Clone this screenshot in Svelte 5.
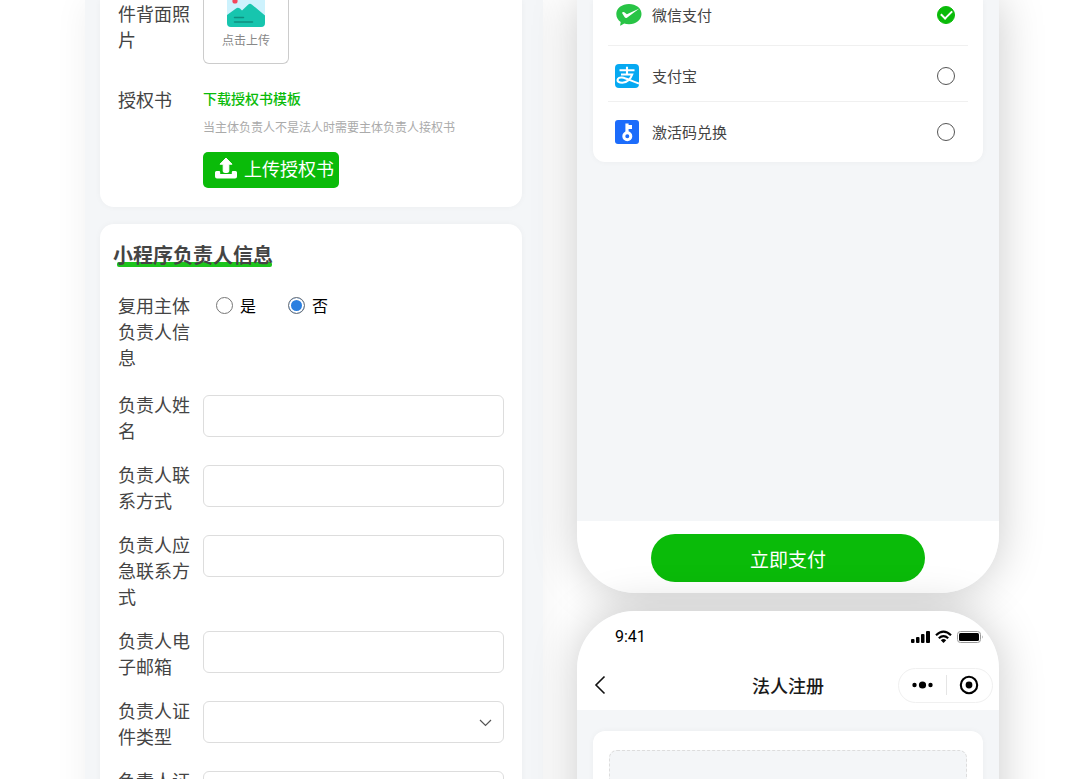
<script>
  let reuse = $state('no');
  let payment = $state('wechat');

  const fields = [
    { id: 'name', label: '负责人姓名', type: 'text' },
    { id: 'phone', label: '负责人联系方式', type: 'tel' },
    { id: 'emergency', label: '负责人应急联系方式', type: 'tel' },
    { id: 'email', label: '负责人电子邮箱', type: 'email' },
    { id: 'idtype', label: '负责人证件类型', type: 'select' },
    { id: 'idno', label: '负责人证', type: 'text' },
  ];

  const methods = [
    { id: 'wechat', label: '微信支付' },
    { id: 'alipay', label: '支付宝' },
    { id: 'code', label: '激活码兑换' },
  ];
</script>

<div class="page">
  <section class="screen form-screen">
    <div class="card first">
      <div class="row">
        <span class="label">件背面照片</span>
        <button type="button" class="upload">
          <svg width="38" height="27" viewBox="0 0 38 27" aria-hidden="true">
            <rect y="-12" width="38" height="39" rx="4" fill="#cdf2fd" />
            <circle cx="8" cy="1" r="2.6" fill="#f5475b" />
            <path
              d="M0 15 9 8.4Q11 7 13 8.6L15 10.4 21.3 4.4Q23 3 24.7 4.4L38 15.5V23Q38 27 34 27H4Q0 27 0 23Z"
              fill="#17c5ae"
            />
            <path d="M7.5 17.5h9M7.5 22h18" stroke="#0f8e80" stroke-width="1.5" stroke-linecap="round" />
          </svg>
          <span>点击上传</span>
        </button>
      </div>
      <div class="row">
        <span class="label">授权书</span>
        <div>
          <a class="download" href="#template">下载授权书模板</a>
          <p class="hint">当主体负责人不是法人时需要主体负责人接权书</p>
          <button type="button" class="upload-btn">
            <svg width="22" height="22" viewBox="0 0 22 22" aria-hidden="true">
              <path
                d="M11 1 17 7.2H13.8V14Q13.8 15.5 12.3 15.5H9.7Q8.2 15.5 8.2 14V7.2H5Z"
                fill="#fff"
                stroke="#fff"
                stroke-linejoin="round"
              />
              <path
                d="M1.5 14H4Q5.2 14 5.2 15.2V17H16.8V15.2Q16.8 14 18 14H20.5Q22 14 22 15.5V19.5Q22 21.5 20 21.5H2Q0 21.5 0 19.5V15.5Q0 14 1.5 14Z"
                fill="#fff"
              />
            </svg>
            上传授权书
          </button>
        </div>
      </div>
    </div>

    <div class="card">
      <h2>小程序负责人信息</h2>
      <div class="row reuse" role="radiogroup" aria-labelledby="reuse-label">
        <span class="label" id="reuse-label">复用主体负责人信息</span>
        <div class="options">
          <label><input type="radio" name="reuse" value="yes" bind:group={reuse} />是</label>
          <label><input type="radio" name="reuse" value="no" bind:group={reuse} />否</label>
        </div>
      </div>
      {#each fields as field}
        <div class="row">
          <label class="label" for={field.id}>{field.label}</label>
          {#if field.type === 'select'}
            <div class="select">
              <select id={field.id}></select>
              <svg width="13" height="8" viewBox="0 0 13 8" aria-hidden="true">
                <path d="M1 1l5.5 5.5L12 1" fill="none" stroke="#555" stroke-width="1.2" />
              </svg>
            </div>
          {:else}
            <input class="control" id={field.id} type={field.type} />
          {/if}
        </div>
      {/each}
    </div>
  </section>

  <div class="column">
    <section class="screen phone pay">
      <div class="pay-body">
        <ul>
          {#each methods as method}
            <li>
              <label>
                {#if method.id === 'wechat'}
                  <svg width="27" height="24" viewBox="0 0 27 24" aria-hidden="true">
                    <path
                      d="M14 1C21 1 26.5 5.2 26.5 11S21 21.2 14 21.2C12.2 21.2 10.6 21 9.2 20.5L5.8 22.6Q5 23 5.2 22L5.7 19C3 17.2 1.3 14.3 1.3 11 1.3 5.2 7 1 14 1Z"
                      fill="#28c445"
                    />
                    <path
                      d="M7.5 9.2Q8.5 8.6 9.3 9.3L11.9 11.2 24.4 5.5 12 14.7Q10.6 15.5 9.7 14.3L7.2 10.2Q6.9 9.6 7.5 9.2Z"
                      fill="#fff"
                    />
                  </svg>
                {:else if method.id === 'alipay'}
                  <svg width="24" height="24" viewBox="0 0 24 24" aria-hidden="true">
                    <rect width="24" height="24" rx="4" fill="#06a9f2" />
                    <path
                      d="M4.5 6.3H19.5M12 2.8V10.5M6 10.5H17.2C16 14 12.5 18.7 7.3 18.7 3.8 18.7 2.4 17.4 2.6 15.8 2.8 14 4.8 13.2 7 13.5 11.5 14.2 16 16.8 24 19.5"
                      fill="none"
                      stroke="#fff"
                      stroke-width="2.1"
                    />
                  </svg>
                {:else}
                  <svg width="24" height="24" viewBox="0 0 24 24" aria-hidden="true">
                    <rect width="24" height="24" rx="3" fill="#1c6cfb" />
                    <circle cx="12.3" cy="16.2" r="3.5" fill="none" stroke="#fff" stroke-width="3" />
                    <path d="M12 13V3.5" stroke="#fff" stroke-width="3.2" />
                    <path d="M13 5h4v4h-4z" fill="#fff" />
                  </svg>
                {/if}
                <span>{method.label}</span>
                <input type="radio" name="payment" value={method.id} bind:group={payment} />
              </label>
            </li>
          {/each}
        </ul>
      </div>
      <footer>
        <button type="button" class="pay-btn">立即支付</button>
      </footer>
    </section>

    <section class="screen phone register">
      <header>
        <div class="status">
          <span>9:41</span>
          <svg width="73" height="14" viewBox="0 0 73 14" aria-hidden="true">
            <rect x="0" y="9" width="3.5" height="4" rx="1" />
            <rect x="5" y="7" width="3.5" height="6" rx="1" />
            <rect x="10" y="4" width="3.5" height="9" rx="1" />
            <rect x="15" y="1" width="4" height="12" rx="1" />
            <g fill="none" stroke="#000" stroke-width="2.2">
              <path d="M25 5.2Q32.5-1.8 40 5.2" />
              <path d="M27.8 8.2Q32.5 3.9 37.2 8.2" />
            </g>
            <path d="M29.8 10.2Q32.5 8 35.2 10.2L32.5 13Z" />
            <rect x="46.5" y="1.5" width="23" height="11" rx="3" fill="none" stroke="#999" />
            <rect x="48" y="3" width="20" height="8" rx="1.5" />
            <path d="M71 5.3Q72.5 7 71 8.7Z" fill="#999" />
          </svg>
        </div>
        <nav>
          <button type="button" class="back" aria-label="返回">
            <svg width="12" height="20" viewBox="0 0 12 20" aria-hidden="true">
              <path d="M10.5 1.5 2 10l8.5 8.5" fill="none" stroke="#111" stroke-width="1.6" />
            </svg>
          </button>
          <h1>法人注册</h1>
          <div class="capsule">
            <button type="button" aria-label="更多">
              <svg width="21" height="8" viewBox="0 0 21 8" aria-hidden="true">
                <circle cx="2.5" cy="4" r="2.2" />
                <circle cx="10.5" cy="4" r="3.6" />
                <circle cx="18.5" cy="4" r="2.2" />
              </svg>
            </button>
            <button type="button" aria-label="关闭">
              <svg width="20" height="20" viewBox="0 0 20 20" aria-hidden="true">
                <circle cx="10" cy="10" r="8.2" fill="none" stroke="#000" stroke-width="2.1" />
                <circle cx="10" cy="10" r="3.4" />
              </svg>
            </button>
          </div>
        </nav>
      </header>
      <div class="register-body">
        <div class="panel">
          <div class="dropzone"></div>
        </div>
      </div>
    </section>
  </div>
</div>

<style>
  :global(body) {
    background: #fff;
    font-family: 'Noto Sans CJK SC', sans-serif;
    color: #444;
  }
  .page,
  .page * {
    box-sizing: border-box;
  }
  .page {
    display: grid;
    grid-template-columns: 458fr 422fr;
    gap: 34px;
    height: 100vh;
    padding: 0 81px 0 85px;
    overflow: hidden;
  }
  button {
    border: 0;
    padding: 0;
    background: none;
    font-family: inherit;
    cursor: pointer;
  }
  svg {
    display: block;
    flex: none;
  }
  .screen {
    background: #f4f6f8;
  }
  .form-screen {
    display: flex;
    flex-direction: column;
    gap: 17px;
    padding: 0 21px 0 15px;
    box-shadow: 0 0 32px rgba(0, 0, 0, 0.06);
  }
  .card {
    padding: 16px 18px 18px;
    border-radius: 14px;
    background: #fff;
    box-shadow: 0 0 6px rgba(0, 0, 0, 0.04);
  }
  .card.first {
    padding: 0 18px 19px;
    border-radius: 0 0 14px 14px;
  }
  .row {
    display: grid;
    grid-template-columns: 72px 1fr;
    column-gap: 13px;
    align-items: start;
    margin-bottom: 18px;
  }
  .first .row {
    margin-bottom: 22px;
  }
  .first .row:last-child {
    margin-bottom: 0;
  }
  .row.reuse {
    margin-bottom: 21px;
  }
  .label {
    font-size: 18px;
    line-height: 26px;
  }
  .upload {
    display: flex;
    flex-direction: column;
    align-items: center;
    gap: 3px;
    width: 86px;
    height: 64px;
    border: 1px solid #ccc;
    border-top: 0;
    border-radius: 0 0 6px 6px;
    color: #888;
    font-size: 12px;
    line-height: 20px;
  }
  .download {
    display: block;
    color: #0abb09;
    font-size: 14px;
    font-weight: 500;
    line-height: 24px;
    text-decoration: none;
  }
  .hint {
    margin: 8px 0 16px;
    color: #aaa;
    font-size: 12px;
    line-height: 18px;
  }
  .upload-btn {
    display: flex;
    align-items: center;
    gap: 7px;
    height: 36px;
    padding: 0 5px 4px 12px;
    border-radius: 5px;
    background: #0abb09;
    color: #fff;
    font-size: 18px;
  }
  h2 {
    position: relative;
    z-index: 0;
    width: fit-content;
    margin: 0 0 22px -5px;
    font-size: 20px;
    line-height: 30px;
  }
  h2::before {
    content: '';
    position: absolute;
    z-index: -1;
    left: 4px;
    right: 1px;
    bottom: 3px;
    height: 5px;
    border-radius: 2px;
    background: #1cc41c;
  }
  .options {
    display: flex;
    gap: 32px;
    padding-left: 13px;
  }
  .options label {
    display: flex;
    align-items: center;
    gap: 7px;
    color: #000;
    font-size: 16px;
    line-height: 26px;
  }
  .options input {
    appearance: none;
    width: 17px;
    height: 17px;
    margin: 0;
    border: 1px solid #767676;
    border-radius: 50%;
  }
  .options input:checked {
    background: #2a7fe0;
    box-shadow: inset 0 0 0 2px #fff;
  }
  .control,
  select {
    width: 100%;
    height: 42px;
    padding: 0 12px;
    border: 1px solid #ddd;
    border-radius: 6px;
    background: #fff;
    font: inherit;
  }
  .control,
  .select {
    margin-top: 4px;
  }
  .select {
    position: relative;
  }
  select {
    display: block;
    appearance: none;
  }
  .select svg {
    position: absolute;
    top: 18px;
    right: 12px;
    pointer-events: none;
  }
  .column {
    display: flex;
    flex-direction: column;
    gap: 18px;
  }
  .phone {
    flex: none;
    box-shadow: 0 0 46px rgba(0, 0, 0, 0.21);
  }
  .pay {
    border-radius: 0 0 58px 58px;
  }
  .pay-body {
    min-height: 521px;
    padding: 0 16px;
  }
  ul {
    margin: 0;
    padding: 0 15px;
    border-radius: 0 0 12px 12px;
    background: #fff;
    box-shadow: 0 0 6px rgba(0, 0, 0, 0.04);
    list-style: none;
  }
  li {
    padding: 18px 13px 18px 7px;
  }
  li:first-child {
    padding-top: 3px;
  }
  li:nth-child(2) {
    padding-bottom: 13px;
  }
  li + li {
    border-top: 1px solid #f0f0f0;
  }
  li label {
    display: grid;
    grid-template-columns: 24px 1fr 18px;
    column-gap: 13px;
    align-items: center;
    font-size: 15px;
    line-height: 24px;
  }
  li input {
    display: grid;
    place-items: center;
    appearance: none;
    width: 18px;
    height: 18px;
    margin: 0;
    border: 1px solid #555;
    border-radius: 50%;
  }
  li input:checked {
    border-color: #0abb09;
    background: #0abb09;
  }
  li input:checked::after {
    content: '';
    width: 9px;
    height: 5px;
    margin-bottom: 3px;
    border: solid #fff;
    border-width: 0 0 2px 2px;
    transform: rotate(-45deg);
  }
  footer {
    display: flex;
    justify-content: center;
    padding: 13px 0 11px;
    border-radius: 0 0 58px 58px;
    background: #fff;
  }
  .pay-btn {
    width: 65%;
    height: 48px;
    border-radius: 24px;
    background: #0abb09;
    color: #fff;
    font-size: 19px;
  }
  .register {
    border-radius: 58px 58px 0 0;
  }
  header {
    padding-top: 16px;
    border-radius: 58px 58px 0 0;
    background: #fff;
  }
  .status {
    display: flex;
    align-items: center;
    justify-content: space-between;
    padding: 0 15px 0 38px;
    color: #000;
    font-family: Roboto, sans-serif;
    font-size: 16px;
    line-height: 20px;
  }
  nav {
    display: grid;
    grid-template-columns: 1fr auto 1fr;
    align-items: center;
    height: 50px;
    margin-top: 13px;
    padding: 0 6px;
  }
  .back {
    justify-self: start;
    margin-left: 11px;
  }
  h1 {
    margin: 0;
    color: #1a1a1a;
    font-size: 18px;
    font-weight: 500;
    line-height: 26px;
  }
  .capsule {
    display: grid;
    grid-template-columns: 1fr 1fr;
    align-items: center;
    justify-self: end;
    width: 95px;
    height: 35px;
    border: 1px solid #f0f0f0;
    border-radius: 18px;
  }
  .capsule button {
    display: grid;
    place-items: center;
    height: 20px;
  }
  .capsule button + button {
    border-left: 1px solid #e5e5e5;
  }
  .register-body {
    padding: 21px 16px 0;
  }
  .panel {
    padding: 19px 16px 16px;
    border-radius: 12px;
    background: #fff;
    box-shadow: 0 0 6px rgba(0, 0, 0, 0.04);
  }
  .dropzone {
    height: 160px;
    border: 1px dashed #ddd;
    border-radius: 8px;
    background: #f4f6f8;
  }
</style>
